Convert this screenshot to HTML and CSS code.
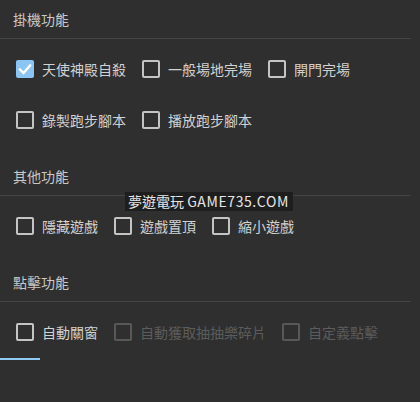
FILE: index.html
```html
<!DOCTYPE html>
<html lang="zh-Hant">
<head>
<meta charset="utf-8">
<link rel="stylesheet" href="styles.css">
</head>
<body>
<div class="panel">
  <div class="section">
    <div class="section-title">掛機功能</div>
    <div class="section-body">
      <div class="row">
        <label class="item"><span class="box checked"><svg viewBox="0 0 18 18" width="18" height="18"><polyline points="4,9.5 7.5,13 14,5.5" fill="none" stroke="#fff" stroke-width="2.4" stroke-linecap="square"/></svg></span><span class="label">天使神殿自殺</span></label>
        <label class="item"><span class="box"></span><span class="label">一般場地完場</span></label>
        <label class="item"><span class="box"></span><span class="label">開門完場</span></label>
      </div>
      <div class="row">
        <label class="item"><span class="box"></span><span class="label">錄製跑步腳本</span></label>
        <label class="item"><span class="box"></span><span class="label">播放跑步腳本</span></label>
      </div>
    </div>
  </div>
  <div class="section">
    <div class="section-title">其他功能</div>
    <div class="section-body">
      <div class="row">
        <label class="item"><span class="box"></span><span class="label">隱藏遊戲</span></label>
        <label class="item"><span class="box"></span><span class="label">遊戲置頂</span></label>
        <label class="item"><span class="box"></span><span class="label">縮小遊戲</span></label>
      </div>
    </div>
  </div>
  <div class="section">
    <div class="section-title">點擊功能</div>
    <div class="section-body last">
      <div class="row">
        <label class="item"><span class="box"></span><span class="label">自動關窗</span></label>
        <label class="item disabled"><span class="box"></span><span class="label">自動獲取抽抽樂碎片</span></label>
        <label class="item disabled"><span class="box"></span><span class="label">自定義點擊</span></label>
      </div>
    </div>
  </div>
  <div class="tab-indicator"></div>
  <div class="watermark">夢遊電玩 <span class="wm-latin">GAME735.COM</span></div>
</div>
</body>
</html>
```
FILE: styles.css
```css
html, body {
  margin: 0;
  padding: 0;
  background: #2f2f2f;
}
body {
  width: 420px;
  height: 402px;
  overflow: hidden;
  font-family: "Noto Sans CJK TC", "Noto Sans", sans-serif;
  font-size: 14px;
  color: #d2d2d2;
}
.panel {
  position: relative;
  width: 420px;
  height: 402px;
}
.section-title {
  height: 38px;
  display: flex;
  align-items: center;
  padding-left: 13px;
  margin-right: 9px;
  border-bottom: 1px solid #454545;
  color: #c9c9c9;
  font-size: 14px;
  line-height: 14px;
}
.section-body {
  padding: 21px 0 28px 16px;
  display: flex;
  flex-direction: column;
  gap: 33px;
}
.section-body.last {
  padding-bottom: 0;
}
.row {
  display: flex;
  gap: 16px;
  height: 18px;
  align-items: center;
}
.item {
  display: flex;
  align-items: center;
  gap: 8px;
  height: 18px;
}
.box {
  box-sizing: border-box;
  width: 18px;
  height: 18px;
  border: 2px solid #c4c4c4;
  border-radius: 2px;
  display: block;
  position: relative;
}
.box.checked {
  border: none;
  background: #8ac5f4;
}
.box svg {
  display: block;
}
.label {
  line-height: 18px;
  white-space: nowrap;
}
.item.disabled .box {
  border-color: #585858;
}
.item.disabled .label {
  color: #5c5c5c;
}
.tab-indicator {
  margin-top: 17px;
  width: 40px;
  height: 2px;
  background: #8ecbf5;
}
.watermark {
  position: absolute;
  left: 125px;
  top: 192px;
  height: 19px;
  padding: 0 4px 0 3px;
  background: #1e1e1e;
  color: #e6e6e6;
  font-family: "Noto Sans CJK TC", "Noto Sans", sans-serif;
  font-size: 14px;
  line-height: 19px;
  white-space: nowrap;
}
.wm-latin {
  letter-spacing: 0.6px;
}
```
